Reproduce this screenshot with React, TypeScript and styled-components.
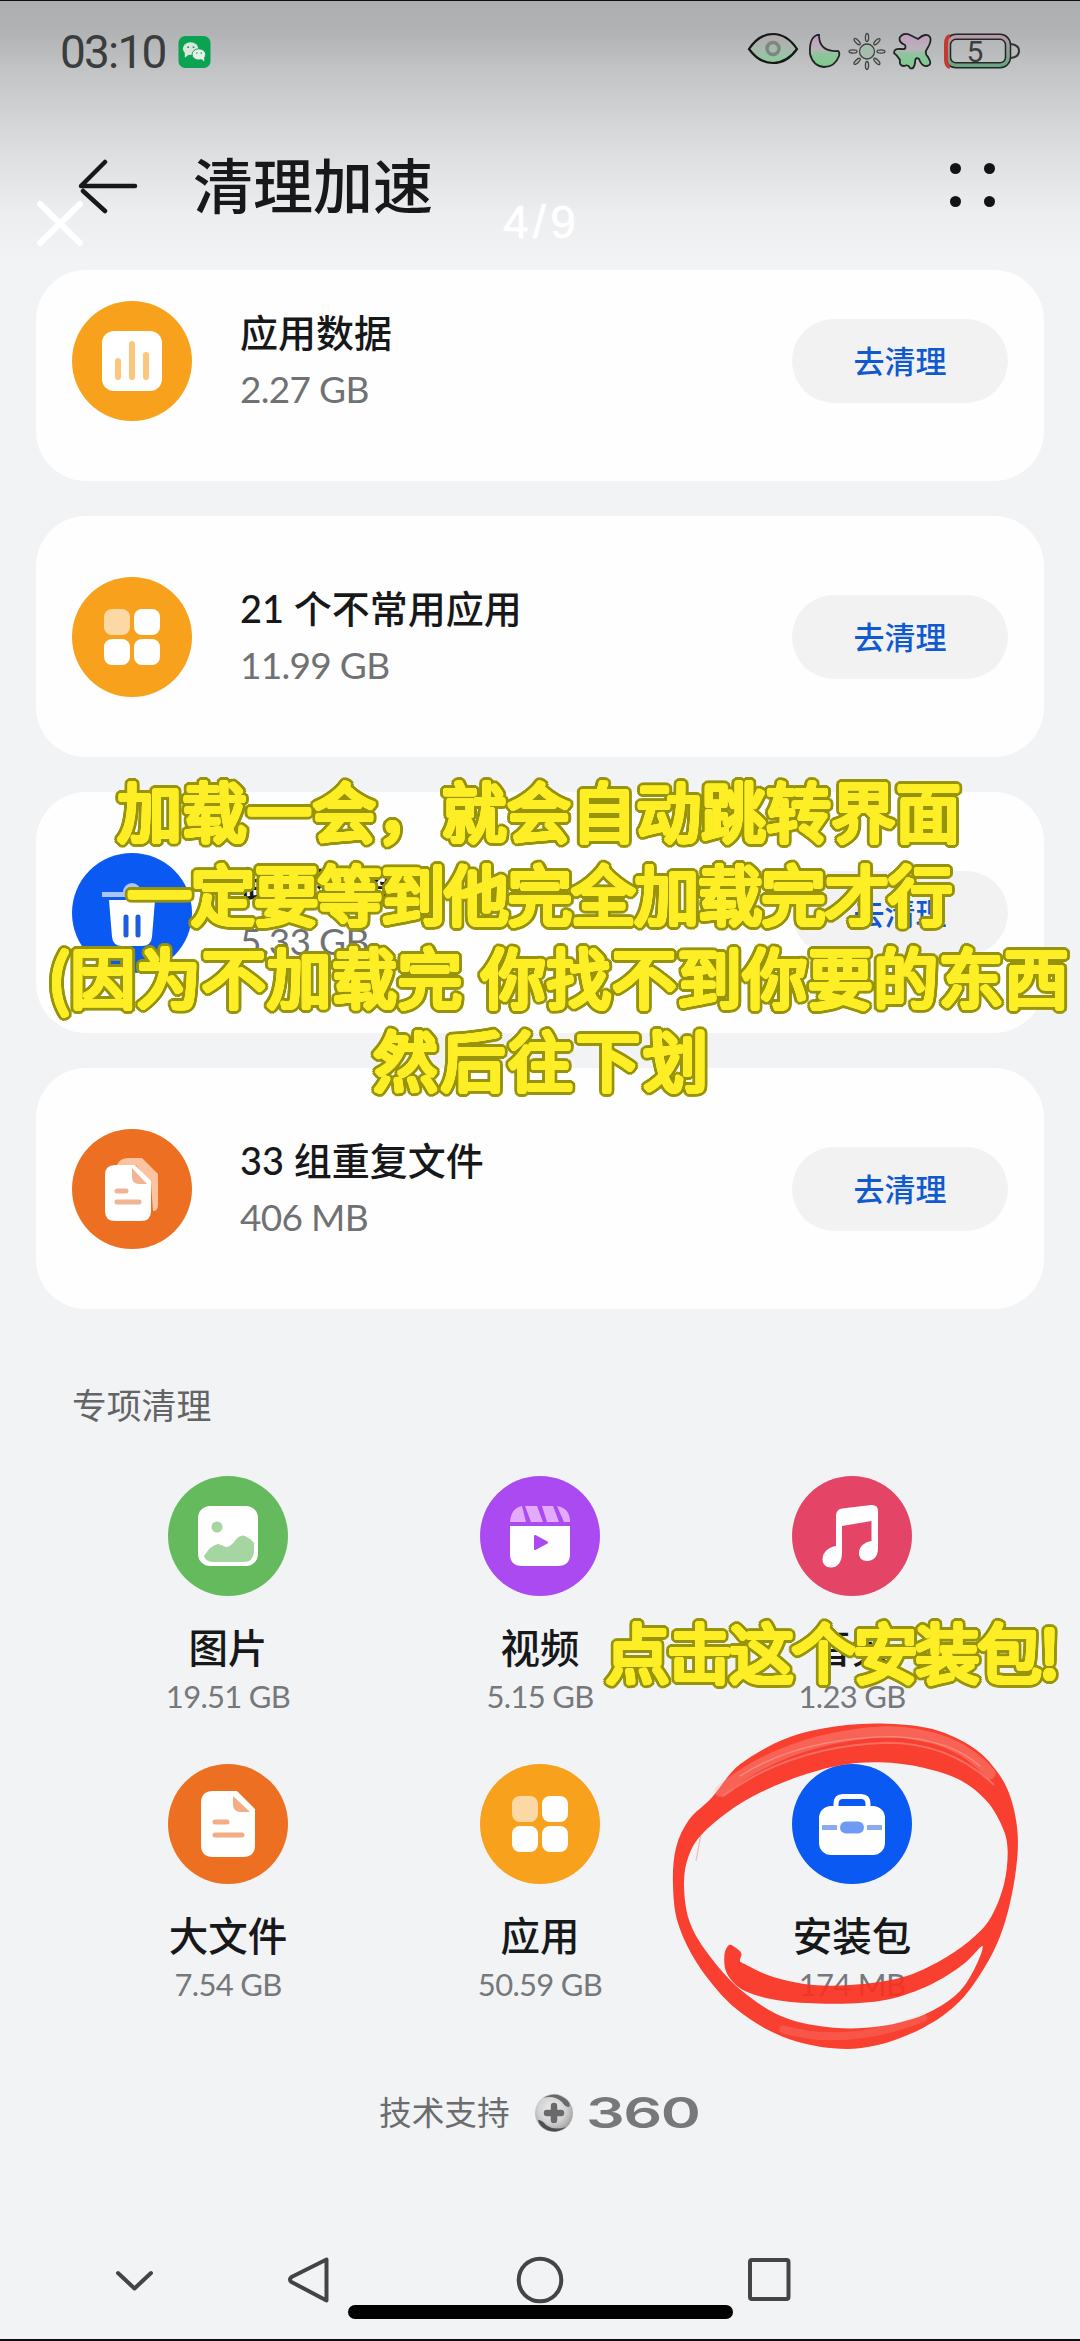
import React from "react";
import styled, { createGlobalStyle, css } from "styled-components";

const sans = `Lato, "Noto Sans CJK SC", sans-serif`;

const Global = createGlobalStyle`
  * { box-sizing: border-box; }
  body { margin: 0; background: #f2f3f5; font-family: ${sans}; color: #17181a; }
`;

const Screen = styled.main`
  position: relative;
  width: 1080px;
  height: 2341px;
  overflow: hidden;
  display: flex;
  flex-direction: column;
  border-top: 1px solid #0d0d12;
  border-bottom: 2px solid #0d0d12;
  background: linear-gradient(180deg, #adaeb0 0, #b2b3b5 32px, #c3c4c6 70px, #d4d6d7 124px, #e2e3e5 170px, #edeef0 215px, #f2f3f5 262px);
`;

const StatusBar = styled.header`
  height: 101px;
  padding: 0 59px 0 60px;
  display: flex;
  align-items: center;
  justify-content: space-between;
`;

const StatusGroup = styled.div<{ $gap: number }>`
  display: flex;
  align-items: center;
  gap: ${(p) => p.$gap}px;
`;

const Clock = styled.span`
  font: 400 46px/50px Roboto, sans-serif;
  letter-spacing: -1.8px;
  color: #3b3c3e;
  white-space: nowrap;
`;

const TitleBar = styled.div`
  height: 168px;
  padding: 0 85px 0 77px;
  display: flex;
  align-items: flex-start;
`;

const BackIcon = styled.svg`
  width: 62px;
  height: 56px;
  margin-top: 56px;
`;

const Title = styled.h1`
  margin: 42px auto 0 54px;
  font-size: 60px;
  line-height: 84px;
  font-weight: 500;
`;

const Dots = styled.div`
  display: grid;
  grid-template-columns: 11px 11px;
  gap: 22px 23px;
  margin-top: 61px;
`;

const Dot = styled.i`
  width: 11px;
  height: 11px;
  border-radius: 50%;
  background: #121315;
`;

const CardList = styled.section`
  display: flex;
  flex-direction: column;
  gap: 36px;
  padding: 0 36px;
`;

const Card = styled.article<{ $clipped?: boolean }>`
  height: ${(p) => (p.$clipped ? 211 : 241)}px;
  margin-bottom: -1px;
  padding: 0 36px;
  ${(p) => p.$clipped && css`padding-bottom: 30px;`}
  border-radius: 50px;
  background: #fefefe;
  display: flex;
  align-items: center;
`;

const Disc = styled.div<{ $color: string }>`
  width: 120px;
  height: 120px;
  flex: none;
  border-radius: 50%;
  background: ${(p) => p.$color};
  svg { display: block; width: 120px; height: 120px; }
`;

const CardText = styled.div`
  flex: 1;
  padding-left: 48px;
  margin-top: -3px;
  display: flex;
  flex-direction: column;
  white-space: nowrap;
`;

const CardTitle = styled.span`
  font-size: 38px;
  line-height: 54px;
  font-weight: 500;
`;

const CardSize = styled.span`
  font-size: 37px;
  line-height: 48px;
  margin-top: 6px;
  letter-spacing: -0.7px;
  color: #707173;
`;

const CleanButton = styled.button`
  width: 216px;
  height: 84px;
  border: 0;
  border-radius: 42px;
  background: #f2f2f3;
  color: #1159cf;
  font: 500 31px/44px ${sans};
`;

const SectionTitle = styled.h2`
  margin: 73px 0 0 72px;
  font-size: 34.8px;
  line-height: 50px;
  font-weight: 400;
  color: #636466;
`;

const Grid = styled.section`
  margin: 45px 72px 0;
  display: grid;
  grid-template-columns: repeat(3, 312px);
  grid-auto-rows: 288px;
`;

const Cell = styled.div`
  display: flex;
  flex-direction: column;
  align-items: center;
`;

const CellLabel = styled.span`
  margin-top: 25px;
  font-size: 39.5px;
  line-height: 54px;
  font-weight: 500;
`;

const CellSize = styled.span`
  font-size: 31px;
  line-height: 38px;
  margin-top: 2px;
  letter-spacing: -0.7px;
  color: #77787b;
  white-space: nowrap;
`;

const Support = styled.div`
  margin: 36px 0 0 379px;
  height: 50px;
  display: flex;
  align-items: center;
  font-size: 32.7px;
  line-height: 50px;
  color: #6b6c6e;
  svg { margin-left: 24px; width: 40px; height: 40px; }
`;

const Brand = styled.span`
  margin-left: 12px;
  font: 600 42px/50px Inter, sans-serif;
  color: #77787a;
  letter-spacing: -1px;
  transform: scaleX(1.45);
  transform-origin: left center;
`;

const NavBar = styled.nav`
  margin-top: auto;
  height: 115px;
  padding: 31px 0 0 115px;
  display: flex;
  align-items: flex-start;
  svg { display: block; height: 50px; flex: none; }
`;

const HomeIndicator = styled.div`
  position: absolute;
  left: 348px;
  top: 2304px;
  width: 385px;
  height: 14px;
  border-radius: 7px;
  background: #000;
`;

const ViewerClose = styled.svg`
  position: absolute;
  left: 35px;
  top: 197px;
  width: 50px;
  height: 50px;
`;

const ViewerCount = styled.span`
  position: absolute;
  left: 503px;
  top: 193px;
  font: 400 46px/56px "Liberation Sans", sans-serif;
  letter-spacing: 4.5px;
  color: #fff;
  -webkit-text-stroke: 0.6px #fff;
`;

/* Offsets on circles of the given radius, so that the glyphs grow with rounded ends. */
const ring = (radius: number, color: string) =>
  Array.from({ length: 20 }, (_, i) => {
    const a = (i / 20) * Math.PI * 2;
    return `${(Math.cos(a) * radius).toFixed(2)}px ${(Math.sin(a) * radius).toFixed(2)}px 0 ${color}`;
  }).join(",");

const captionShadow = [ring(2, "#fdee26"), ring(3.6, "#98940a"), ring(5, "#98940a")].join(",");

const CaptionLine = styled.p<{ $x: number; $y: number; $spacing: number }>`
  position: absolute;
  left: ${(p) => p.$x}px;
  top: ${(p) => p.$y}px;
  margin: 0;
  font: 400 65px/84px "Noto Sans CJK SC", sans-serif;
  letter-spacing: ${(p) => p.$spacing}px;
  word-spacing: 3px;
  white-space: pre;
  color: #fdee26;
  text-shadow: ${captionShadow};
`;

const Scribble = styled.svg`
  position: absolute;
  left: 640px;
  top: 1700px;
  width: 440px;
  height: 370px;
`;

type Pt = [number, number];

function smooth(pts: Pt[]): string {
  const n = pts.length;
  let d = `M${pts[0][0]} ${pts[0][1]}`;
  for (let i = 0; i < n; i++) {
    const a = pts[(i - 1 + n) % n];
    const b = pts[i];
    const c = pts[(i + 1) % n];
    const e = pts[(i + 2) % n];
    d += `C${b[0] + (c[0] - a[0]) / 6} ${b[1] + (c[1] - a[1]) / 6} ${c[0] - (e[0] - b[0]) / 6} ${c[1] - (e[1] - b[1]) / 6} ${c[0]} ${c[1]}`;
  }
  return d + "Z";
}

const ringOuter: Pt[] = [
  [99, 550], [108, 440], [148, 355], [215, 290], [300, 190], [440, 112], [590, 76], [740, 68], [880, 85],
  [1000, 140], [1070, 210], [1112, 290], [1133, 400], [1126, 520], [1096, 660], [1045, 780], [960, 900],
  [850, 980], [710, 1033], [580, 1042], [430, 1008], [290, 925], [180, 800], [115, 670],
];
const ringInner: Pt[] = [
  [132, 550], [146, 465], [190, 395], [300, 308], [440, 240], [590, 195], [720, 184], [850, 200], [960, 237],
  [1040, 300], [1088, 380], [1103, 450], [1092, 550], [1055, 645], [1005, 705], [920, 768], [800, 825],
  [660, 850], [520, 852], [400, 828], [312, 788], [300, 778], [304, 757], [285, 739], [266, 733], [253, 765], [262, 820],
  [315, 870], [430, 900], [590, 908], [740, 896], [870, 852], [970, 790], [1027, 735], [1005, 800], [950, 880],
  [850, 942], [720, 976], [580, 980], [430, 948], [300, 865], [205, 760], [148, 660],
];

const AppsGlyph = () => (
  <svg viewBox="0 0 120 120" fill="#fff">
    <rect x="32" y="32" width="26" height="26" rx="8" opacity=".6" />
    <rect x="62" y="32" width="26" height="26" rx="8" />
    <rect x="32" y="62" width="26" height="26" rx="8" />
    <rect x="62" y="62" width="26" height="26" rx="8" />
  </svg>
);

const ChartGlyph = () => (
  <svg viewBox="0 0 120 120">
    <rect x="30" y="30" width="60" height="60" rx="12" fill="#fff" />
    <path d="M46 60V76M60 43V76M74 54V76" stroke="#fbc77c" strokeWidth="6" strokeLinecap="round" />
  </svg>
);

const TrashGlyph = () => (
  <svg viewBox="0 0 120 120">
    <path d="M30 39H90V44H30ZM51 39a9 9 0 0 1 18 0Z" fill="#fff" opacity=".65" />
    <path d="M37 47H83L80 84Q79 93 70 93H50Q41 93 40 84Z" fill="#fff" />
    <path d="M54 64V82M66 64V82" stroke="#1d5be0" strokeWidth="5" strokeLinecap="round" />
  </svg>
);

const CopyGlyph = () => (
  <svg viewBox="0 0 120 120">
    <path d="M45 36Q48 29 56 29H70L86 45V76Q86 82 81 82L79 55L64 36Z" fill="#fbc3a0" />
    <path d="M43 36H63L79 52V82Q79 92 69 92H43Q33 92 33 82V46Q33 36 43 36Z" fill="#fff" />
    <path d="M60 39L75 55H67Q60 55 60 48Z" fill="#f0b592" />
    <path d="M45 62H54M45 73H67" stroke="#f0b592" strokeWidth="5" strokeLinecap="round" />
  </svg>
);

const PhotoGlyph = () => (
  <svg viewBox="0 0 120 120">
    <rect x="30" y="30" width="60" height="60" rx="12" fill="#fff" />
    <circle cx="49" cy="51" r="5.5" fill="#a5d5a1" />
    <path d="M36 80Q43 69 50 68Q54 69 58 71Q62 71 66 66Q72 58 77 60Q82 62 86 67V76Q85 86 76 86H44Q37 85 36 80Z" fill="#a5d5a1" />
  </svg>
);

const VideoGlyph = () => (
  <svg viewBox="0 0 120 120">
    <path d="M30 46Q31 32 42 30L46 46ZM45 30H57L63 46H51ZM62 30H73L79 46H67ZM77 30Q90 32 90 46H84Z" fill="#e3abfd" />
    <path d="M30 50H90V78Q90 90 78 90H42Q30 90 30 78Z" fill="#fff" />
    <path d="M55 60L67 66.500L55 73Z" fill="#aa4af0" stroke="#aa4af0" strokeWidth="2" strokeLinejoin="round" />
  </svg>
);

const MusicGlyph = () => (
  <svg viewBox="0 0 120 120">
    <path
      fill="#fff"
      d="M44 70V40Q44 33.500 50 32.500L79 29Q86 28.500 86 35V72C86 80 82 85 75 85C70 85 67 82 67 77C67 70 73 66 79.500 65V45L50 50V76C50 86 46 91.500 39 91.500C34 91.500 30.500 88 30.500 83.500C30.500 76 37 71 44 70Z"
    />
  </svg>
);

const FileGlyph = () => (
  <svg viewBox="0 0 120 120">
    <path d="M45 27H69L87 45V81Q87 93 75 93H45Q33 93 33 81V39Q33 27 45 27Z" fill="#fff" />
    <path d="M65 32L82 48H73Q65 48 65 40Z" fill="#f3ac84" />
    <path d="M47 58H59M47 71H74" stroke="#f3ac84" strokeWidth="5" strokeLinecap="round" />
  </svg>
);

const CaseGlyph = () => (
  <svg viewBox="0 0 120 120">
    <path d="M44 44V40Q44 32.500 51 32.500H69Q76 32.500 76 40V44" fill="none" stroke="#fff" strokeWidth="5" />
    <rect x="27" y="42" width="66" height="49" rx="12" fill="#fff" />
    <path d="M30 61H45V66H30ZM75 61H90V66H75Z" fill="#8daaf0" />
    <rect x="48" y="57.500" width="24" height="12" rx="6" fill="#6e9af6" />
  </svg>
);

const StatusIcons = () => (
  <svg width="274" height="40" viewBox="0 0 274 40">
    <defs>
      <linearGradient id="tint" x1="0" y1="0" x2="0" y2="1">
        <stop offset="0" stopColor="#c69ac4" />
        <stop offset=".45" stopColor="#b9b4b9" />
        <stop offset=".6" stopColor="#8fc49c" />
        <stop offset="1" stopColor="#7ccb8c" />
      </linearGradient>
      <linearGradient id="eyeTint" x1="0" y1="0" x2="0" y2="1">
        <stop offset="0" stopColor="#b5a5ad" />
        <stop offset=".5" stopColor="#a8b9ae" />
        <stop offset="1" stopColor="#8acb9b" />
      </linearGradient>
      <linearGradient id="battery" x1="0" y1="0" x2="0" y2="1">
        <stop offset="0" stopColor="#b99aac" />
        <stop offset="1" stopColor="#6aa583" />
      </linearGradient>
    </defs>
    <path d="M2 17Q12 2 26 2Q40 2 50 17Q40 31 26 31Q12 31 2 17Z" fill="url(#eyeTint)" stroke="#151817" strokeWidth="2.200" />
    <circle cx="26" cy="16.500" r="6" fill="none" stroke="#7c8780" strokeWidth="3.500" />
    <path d="M72 3Q72 20 91 19Q93 20 92 24Q88 35 77 35Q66 34 63 22Q62 6 70 3Z" fill="url(#tint)" stroke="#202422" strokeWidth="1.800" />
    <g fill="#b4b9b6" stroke="#3f4542" strokeWidth="1.300">
      <circle cx="120" cy="19.500" r="7.500" fill="#a6bcac" />
      {[0, 45, 90, 135, 180, 225, 270, 315].map((r) => (
        <ellipse key={r} cx="120" cy="5.500" rx="1.600" ry="4" transform={`rotate(${r} 120 19.500)`} />
      ))}
    </g>
    <path
      d="M153 5Q157 0 163 3L171 7Q179 0 183 5Q185 9 180 17Q177 21 181 25Q186 33 180 34Q175 35 172 27Q168 24 168 31Q167 38 163 36Q161 32 157 34Q152 34 153 28Q150 23 147 21Q147 16 154 17Q160 18 158 13Q151 10 153 5Z"
      fill="url(#tint)"
      stroke="#202422"
      strokeWidth="1.800"
    />
    <rect x="201" y="4.800" width="60" height="28.500" rx="8" fill="none" stroke="#232725" strokeWidth="6.500" />
    <rect x="201" y="4.800" width="60" height="28.500" rx="8" fill="none" stroke="url(#battery)" strokeWidth="3.500" />
    <path d="M203 4Q199 5 199 12V27Q199 34 203 35" fill="none" stroke="#c43a30" strokeWidth="4" />
    <path d="M264 12Q272 13 272 19Q272 25 264 26" fill="none" stroke="#303432" strokeWidth="2" />
    <text x="228" y="29.500" textAnchor="middle" fontFamily="Roboto, sans-serif" fontSize="30" fill="#3c3e3e">5</text>
  </svg>
);

const WeChatBadge = () => (
  <svg width="33" height="34" viewBox="0 0 34 34">
    <rect x=".5" y=".5" width="33" height="33" rx="7" fill="#0ba351" />
    <ellipse cx="13" cy="13.500" rx="8" ry="6.500" fill="#d9e6dc" />
    <path d="M7 17V23L12 19Z" fill="#d9e6dc" />
    <ellipse cx="21.500" cy="19.500" rx="7" ry="5.800" fill="#e6efe8" stroke="#0ba351" strokeWidth="1" />
    <path d="M24 24L27 27V22Z" fill="#e6efe8" />
    <g fill="#0ba351">
      <circle cx="10.500" cy="12" r="1" /><circle cx="16" cy="12" r="1" />
      <circle cx="19.500" cy="18" r=".8" /><circle cx="24" cy="18" r=".8" />
    </g>
  </svg>
);

const cards = [
  { title: "应用数据", size: "2.27 GB", color: "#f7a11c", glyph: <ChartGlyph /> },
  { title: "21 个不常用应用", size: "11.99 GB", color: "#f7a11c", glyph: <AppsGlyph /> },
  { title: "卸载残留", size: "5.33 GB", color: "#0a59f3", glyph: <TrashGlyph /> },
  { title: "33 组重复文件", size: "406 MB", color: "#ed6f21", glyph: <CopyGlyph /> },
];

const categories = [
  { label: "图片", size: "19.51 GB", color: "#64ba5c", glyph: <PhotoGlyph /> },
  { label: "视频", size: "5.15 GB", color: "#aa4af0", glyph: <VideoGlyph /> },
  { label: "音频", size: "1.23 GB", color: "#e44566", glyph: <MusicGlyph /> },
  { label: "大文件", size: "7.54 GB", color: "#ed6f21", glyph: <FileGlyph /> },
  { label: "应用", size: "50.59 GB", color: "#f7a11c", glyph: <AppsGlyph /> },
  { label: "安装包", size: "174 MB", color: "#0a59f3", glyph: <CaseGlyph /> },
];

const captions = [
  { text: "加载一会，就会自动跳转界面", x: 117, y: 766, spacing: -0.1 },
  { text: "一定要等到他完全加载完才行", x: 127, y: 849, spacing: -1.6 },
  { text: "(因为不加载完 你找不到你要的东西", x: 48, y: 932, spacing: 0.4 },
  { text: "然后往下划", x: 373, y: 1015, spacing: 2.5 },
  { text: "点击这个安装包!", x: 605, y: 1607, spacing: -3 },
];

export default function App() {
  return (
    <>
      <Global />
      <Screen>
        <StatusBar>
          <StatusGroup $gap={12}>
            <Clock>03:10</Clock>
            <WeChatBadge />
          </StatusGroup>
          <StatusIcons />
        </StatusBar>
        <TitleBar>
          <BackIcon viewBox="0 0 62 56" fill="none" stroke="#17181a" strokeWidth="4.500" strokeLinecap="round" strokeLinejoin="round">
            <path d="M58 28H4L28 4M6 33L28 53" />
          </BackIcon>
          <Title>清理加速</Title>
          <Dots><Dot /><Dot /><Dot /><Dot /></Dots>
        </TitleBar>
        <CardList>
          {cards.map((c, i) => (
            <Card key={c.title} $clipped={i === 0}>
              <Disc $color={c.color}>{c.glyph}</Disc>
              <CardText>
                <CardTitle>{c.title}</CardTitle>
                <CardSize>{c.size}</CardSize>
              </CardText>
              <CleanButton>去清理</CleanButton>
            </Card>
          ))}
        </CardList>
        <SectionTitle>专项清理</SectionTitle>
        <Grid>
          {categories.map((c) => (
            <Cell key={c.label}>
              <Disc $color={c.color}>{c.glyph}</Disc>
              <CellLabel>{c.label}</CellLabel>
              <CellSize>{c.size}</CellSize>
            </Cell>
          ))}
        </Grid>
        <Support>
          技术支持
          <svg viewBox="0 0 40 40">
            <defs>
              <radialGradient id="orb" cx=".45" cy=".4" r=".6">
                <stop offset="0" stopColor="#eee" />
                <stop offset=".6" stopColor="#d2d2d3" />
                <stop offset="1" stopColor="#a2a2a3" />
              </radialGradient>
            </defs>
            <circle cx="20" cy="20" r="19" fill="url(#orb)" />
            <path d="M9 5Q22 -3 33 7Q37 11 35 14Q31 14 28 9Q20 2 9 5Z" fill="#68696a" />
            <path d="M4 27Q8 27 12 32Q20 38 32 34Q23 41 13 37Q5 33 4 27Z" fill="#4d4e4f" />
            <path d="M20 13V27M13 20H27" stroke="#68696b" strokeWidth="6.500" strokeLinecap="round" />
          </svg>
          <Brand>360</Brand>
        </Support>
        <NavBar>
          <svg width="173" viewBox="0 0 173 50" fill="none" stroke="#434446" strokeWidth="4" strokeLinecap="round" strokeLinejoin="round">
            <path d="M3 18L19.500 33.500L36 18" />
          </svg>
          <svg width="228" viewBox="0 0 228 50" fill="none" stroke="#434446" strokeWidth="4" strokeLinejoin="round">
            <path d="M38.500 4.500V45.500L3.500 27Q0.500 25 3.500 22Z" />
          </svg>
          <svg width="231" viewBox="0 0 231 50" fill="none" stroke="#434446" strokeWidth="4">
            <circle cx="24" cy="25" r="21.300" />
          </svg>
          <svg width="46" viewBox="0 0 46 50" fill="none" stroke="#434446" strokeWidth="4">
            <rect x="3" y="5" width="38.500" height="39" rx="2" />
          </svg>
        </NavBar>
        <HomeIndicator />
        <ViewerClose viewBox="0 0 50 50" stroke="#fff" strokeWidth="6" strokeLinecap="round">
          <path d="M5 6L45 45M45 6L5 45" />
        </ViewerClose>
        <ViewerCount>4/9</ViewerCount>
        {captions.map((c) => (
          <CaptionLine key={c.text} $x={c.x} $y={c.y} $spacing={c.spacing}>
            {c.text}
          </CaptionLine>
        ))}
        <Scribble viewBox="0 0 1320 1110">
          <path d={smooth(ringOuter) + smooth(ringInner)} fill="#f8301e" fillRule="evenodd" opacity=".92" />
          <g fill="none" stroke="#f7b5ae" strokeLinecap="round">
            <path d="M240 270Q440 108 740 92Q950 97 1050 218" strokeWidth="34" opacity=".3" />
            <path d="M250 285Q450 135 740 125Q930 125 1060 250" strokeWidth="6" opacity=".4" />
            <path d="M300 225Q480 110 760 107Q930 115 1020 195" strokeWidth="4" opacity=".5" />
            <path d="M430 985Q620 1040 850 950" strokeWidth="24" opacity=".2" />
          </g>
          <path d="M182 405L168 480" stroke="#f08a80" strokeWidth="4" opacity=".5" />
        </Scribble>
      </Screen>
    </>
  );
}
